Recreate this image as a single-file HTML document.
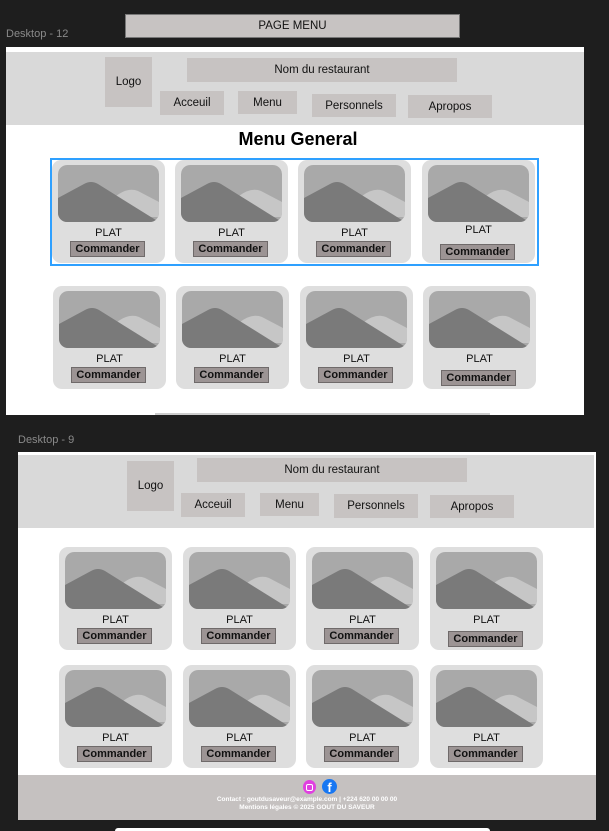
<!DOCTYPE html>
<html><head><meta charset="utf-8"><style>
*{margin:0;padding:0;box-sizing:border-box}
body{width:609px;height:831px;background:#1e1e1e;position:relative;overflow:hidden;font-family:"Liberation Sans",sans-serif}
.a{position:absolute}
.box{position:absolute;background:#c7c3c2;font-size:11.5px;color:#111;display:flex;align-items:center;justify-content:center}
.lbl{position:absolute;color:#8a8a8a;font-size:11px}
.card{position:absolute;background:#dedede;border-radius:9px;width:113px;height:103px}
.card svg{position:absolute;left:6px;top:5px}
.card .p{position:absolute;left:0;width:100%;text-align:center;font-size:11px;top:67px;color:#111}
.card .b{position:absolute;left:18px;top:81px;width:75px;height:16px;background:#9c9494;border:1px solid #6f6a6a;font-size:11px;font-weight:bold;color:#111;text-align:center;line-height:14px}
</style></head><body>
<div class="lbl" style="left:6px;top:28px">Desktop - 12</div>
<div class="box" style="left:125px;top:14px;width:335px;height:24px;border:1px solid #777">PAGE MENU</div>

<div class="a" style="left:6px;top:47px;width:578px;height:368px;background:#fff"></div>
<div class="a" style="left:6px;top:52px;width:578px;height:73px;background:#d9d9d9"></div>
<div class="box" style="left:105px;top:57px;width:47px;height:50px">Logo</div>
<div class="box" style="left:187px;top:58px;width:270px;height:24px">Nom du restaurant</div>
<div class="box" style="left:160px;top:91px;width:64px;height:24px">Acceuil</div>
<div class="box" style="left:238px;top:91px;width:59px;height:23px">Menu</div>
<div class="box" style="left:312px;top:94px;width:84px;height:23px">Personnels</div>
<div class="box" style="left:408px;top:95px;width:84px;height:23px">Apropos</div>
<div class="a" style="left:6px;top:129px;width:584px;text-align:center;font-weight:bold;font-size:18px">Menu General</div>
<div class="a" style="left:50px;top:158px;width:489px;height:108px;border:2px solid #2ea0ff"></div>
<div class="a" style="left:155px;top:413px;width:335px;height:2px;background:#ccc"></div>

<div class="lbl" style="left:18px;top:434px">Desktop - 9</div>
<div class="a" style="left:18px;top:452px;width:578px;height:368px;background:#fff"></div>
<div class="a" style="left:18px;top:455px;width:576px;height:73px;background:#d9d9d9"></div>
<div class="box" style="left:127px;top:461px;width:47px;height:50px">Logo</div>
<div class="box" style="left:197px;top:458px;width:270px;height:24px">Nom du restaurant</div>
<div class="box" style="left:181px;top:493px;width:64px;height:24px">Acceuil</div>
<div class="box" style="left:260px;top:493px;width:59px;height:23px">Menu</div>
<div class="box" style="left:334px;top:494px;width:84px;height:24px">Personnels</div>
<div class="box" style="left:430px;top:495px;width:84px;height:23px">Apropos</div>
<div class="a" style="left:18px;top:775px;width:578px;height:45px;background:#c5c1c0"></div>
<div class="a" style="left:303px;top:780px;width:13px;height:14px;border-radius:50%;background:#e040e0"></div>
<div class="a" style="left:306px;top:784px;width:7px;height:7px;border:1px solid #fff;border-radius:2px"></div>
<div class="a" style="left:322px;top:779px;width:15px;height:15px;border-radius:50%;background:#1877f2;color:#fff;font-weight:bold;font-size:13px;text-align:center;line-height:17px">f</div>
<div class="a" style="left:18px;top:796px;width:578px;text-align:center;color:#fff;font-size:6.5px;font-weight:bold;line-height:8px">Contact : goutdusaveur@example.com | +224 620 00 00 00<br>Mentions légales © 2025 GOUT DU SAVEUR</div>
<div class="a" style="left:115px;top:828px;width:375px;height:3px;background:#fff;border-radius:3px 3px 0 0"></div>

<svg width="0" height="0" style="position:absolute"><defs><symbol id="im" viewBox="0 0 101 57"><rect width="101" height="57" rx="9" fill="#a9a9a9"/><path d="M58 31 Q70 22 80 26 L101 37 L101 52 L85 52Z" fill="#c6c6c6"/><path d="M0 33 L26 19 Q33 15 40 19 L101 57 L0 57Z" fill="#7a7a7a"/></symbol><clipPath id="c"><rect width="101" height="57" rx="9"/></clipPath></defs></svg>

<div class="card" style="left:52px;top:160px"><svg width="101" height="57"><g clip-path="url(#c)"><use href="#im"/></g></svg><div class="p">PLAT</div><div class="b">Commander</div></div>
<div class="card" style="left:175px;top:160px"><svg width="101" height="57"><g clip-path="url(#c)"><use href="#im"/></g></svg><div class="p">PLAT</div><div class="b">Commander</div></div>
<div class="card" style="left:298px;top:160px"><svg width="101" height="57"><g clip-path="url(#c)"><use href="#im"/></g></svg><div class="p">PLAT</div><div class="b">Commander</div></div>
<div class="card" style="left:422px;top:160px"><svg width="101" height="57"><g clip-path="url(#c)"><use href="#im"/></g></svg><div class="p" style="top:64px">PLAT</div><div class="b" style="top:84px">Commander</div></div>

<div class="card" style="left:53px;top:286px"><svg width="101" height="57"><g clip-path="url(#c)"><use href="#im"/></g></svg><div class="p">PLAT</div><div class="b">Commander</div></div>
<div class="card" style="left:176px;top:286px"><svg width="101" height="57"><g clip-path="url(#c)"><use href="#im"/></g></svg><div class="p">PLAT</div><div class="b">Commander</div></div>
<div class="card" style="left:300px;top:286px"><svg width="101" height="57"><g clip-path="url(#c)"><use href="#im"/></g></svg><div class="p">PLAT</div><div class="b">Commander</div></div>
<div class="card" style="left:423px;top:286px"><svg width="101" height="57"><g clip-path="url(#c)"><use href="#im"/></g></svg><div class="p">PLAT</div><div class="b" style="top:84px">Commander</div></div>

<div class="card" style="left:59px;top:547px"><svg width="101" height="57"><g clip-path="url(#c)"><use href="#im"/></g></svg><div class="p">PLAT</div><div class="b">Commander</div></div>
<div class="card" style="left:183px;top:547px"><svg width="101" height="57"><g clip-path="url(#c)"><use href="#im"/></g></svg><div class="p">PLAT</div><div class="b">Commander</div></div>
<div class="card" style="left:306px;top:547px"><svg width="101" height="57"><g clip-path="url(#c)"><use href="#im"/></g></svg><div class="p">PLAT</div><div class="b">Commander</div></div>
<div class="card" style="left:430px;top:547px"><svg width="101" height="57"><g clip-path="url(#c)"><use href="#im"/></g></svg><div class="p">PLAT</div><div class="b" style="top:84px">Commander</div></div>

<div class="card" style="left:59px;top:665px"><svg width="101" height="57"><g clip-path="url(#c)"><use href="#im"/></g></svg><div class="p">PLAT</div><div class="b">Commander</div></div>
<div class="card" style="left:183px;top:665px"><svg width="101" height="57"><g clip-path="url(#c)"><use href="#im"/></g></svg><div class="p">PLAT</div><div class="b">Commander</div></div>
<div class="card" style="left:306px;top:665px"><svg width="101" height="57"><g clip-path="url(#c)"><use href="#im"/></g></svg><div class="p">PLAT</div><div class="b">Commander</div></div>
<div class="card" style="left:430px;top:665px"><svg width="101" height="57"><g clip-path="url(#c)"><use href="#im"/></g></svg><div class="p">PLAT</div><div class="b">Commander</div></div>
</body></html>
